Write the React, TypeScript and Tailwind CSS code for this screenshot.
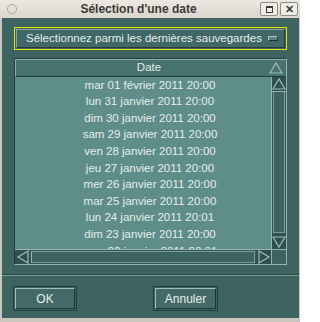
import React from "react";

const rows = [
  "mar 01 février 2011 20:00",
  "lun 31 janvier 2011 20:00",
  "dim 30 janvier 2011 20:00",
  "sam 29 janvier 2011 20:00",
  "ven 28 janvier 2011 20:00",
  "jeu 27 janvier 2011 20:00",
  "mer 26 janvier 2011 20:00",
  "mar 25 janvier 2011 20:00",
  "lun 24 janvier 2011 20:01",
  "dim 23 janvier 2011 20:00",
  "sam 22 janvier 2011 20:01",
];

function Tri({ dir }: { dir: "up" | "down" | "left" | "right" }) {
  const pts = {
    up: "1,12 7,2 13,12",
    down: "1,2 7,12 13,2",
    left: "12,1 2,7 12,13",
    right: "2,1 12,7 2,13",
  }[dir];
  return (
    <svg width="14" height="14" viewBox="0 0 14 14">
      <polygon points={pts} fill="none" stroke="#9fbdb9" strokeWidth="1.2" />
    </svg>
  );
}

export default function App() {
  return (
    <div
      className="w-[300px] h-[322px] bg-[#d8d5cd] flex flex-col overflow-hidden text-[#e4eeeb]"
      style={{ fontFamily: '"Liberation Sans", Arial, sans-serif' }}
    >
      {/* Title bar */}
      <div className="h-[18px] shrink-0 flex items-center px-[7px] bg-gradient-to-b from-[#ece9e3] to-[#d9d5cc]">
        <div className="w-[10px] h-[10px] rounded-full border border-[#a9a59c] bg-[#e4e1da]" />
        <div className="flex-1 text-center text-[12px] font-bold text-[#3c3b37]">
          Sélection d'une date
        </div>
        <div className="flex gap-[2px] -mr-[5px]">
          <div className="w-[18px] h-[14px] border border-[#8d8a83] rounded-[2px] bg-[#efede8] flex items-center justify-center">
            <div className="w-[7px] h-[7px] border border-[#3c3b37] border-t-2" />
          </div>
          <div className="w-[18px] h-[14px] border border-[#8d8a83] rounded-[2px] bg-[#efede8] flex items-center justify-center text-[11px] font-bold text-[#3c3b37] leading-none">
            ✕
          </div>
        </div>
      </div>

      {/* Body */}
      <div className="flex-1 flex flex-col bg-[#3e6462] border-l-2 border-r border-b-4 border-[#c9c6bd]">
        <div className="px-[12px] pt-[9px]">
          {/* Combo */}
          <div className="h-[23px] border border-[#e6e600] p-[1px]">
            <div className="h-full border-t border-l border-[#86a8a5] border-r border-b border-r-[#233d3c] border-b-[#233d3c] bg-[#416866] flex items-center pl-[9px] pr-[4px] text-[11.5px] whitespace-nowrap">
              <span className="flex-1">Sélectionnez parmi les dernières sauvegardes</span>
              <div className="shrink-0 w-[10px] h-[5px] bg-[#5c8683] border-t border-l border-[#a9c4c1] border-b border-r border-b-[#1e3534] border-r-[#1e3534] mr-[2px]" />
            </div>
          </div>

          {/* List */}
          <div className="mt-[8px] h-[207px] border border-[#233d3c] border-r-[#97b3b0] border-b-[#97b3b0] flex flex-col">
            <div className="h-[18px] shrink-0 bg-[#487270] border-t border-l border-[#8fb0ad] border-b border-b-[#233d3c] flex items-center text-[11.5px]">
              <div className="flex-1 text-center pl-[14px]">Date</div>
              <div className="w-[16px] flex justify-center mr-[2px]">
                <Tri dir="up" />
              </div>
            </div>
            <div className="flex-1 flex min-h-0">
              <div className="flex-1 bg-[#5f8d8a] overflow-hidden">
                {rows.map((r) => (
                  <div key={r} className="h-[16.6px] flex items-center justify-center text-[11.5px] whitespace-nowrap pl-[14px]">
                    {r}
                  </div>
                ))}
              </div>
              <div className="w-[15px] bg-[#355856] flex flex-col border-l border-[#97b3b0]">
                <div className="h-[15px] bg-[#2f504e] flex items-center justify-center border-b border-[#97b3b0]">
                  <Tri dir="up" />
                </div>
                <div className="flex-1 border border-[#7a9b98] border-t-0 bg-[#3e6462] m-[1px] mt-0" />
                <div className="h-[15px] bg-[#2f504e] flex items-center justify-center">
                  <Tri dir="down" />
                </div>
              </div>
            </div>
            <div className="h-[15px] shrink-0 flex">
              <div className="flex-1 flex bg-[#355856] border-t border-[#97b3b0]">
                <div className="w-[15px] bg-[#2f504e] flex items-center justify-center">
                  <Tri dir="left" />
                </div>
                <div className="flex-1 bg-[#3e6462] border border-[#7a9b98] border-l-[#97b3b0] m-[1px]" />
                <div className="w-[15px] bg-[#2f504e] flex items-center justify-center">
                  <Tri dir="right" />
                </div>
              </div>
              <div className="w-[15px] bg-[#3e6462] border-t border-l border-[#97b3b0]" />
            </div>
          </div>
        </div>

        {/* Separator */}
        <div className="mt-[9px] h-[2px] border-t border-[#2a4645] border-b border-b-[#7d9c99]" />

        {/* Buttons */}
        <div className="flex pl-[11px] pt-[10px] gap-[76px]">
          <div className="w-[64px] h-[25px] border border-[#233d3c] p-[1px]">
            <div className="h-full border-t border-l border-[#a2bfbc] border-r border-b border-r-[#1e3534] border-b-[#1e3534] bg-[#436a68] flex items-center justify-center text-[12px]">
              OK
            </div>
          </div>
          <div className="w-[65px] h-[25px] border border-[#233d3c] p-[1px]">
            <div className="h-full border-t border-l border-[#a2bfbc] border-r border-b border-r-[#1e3534] border-b-[#1e3534] bg-[#436a68] flex items-center justify-center text-[12px]">
              Annuler
            </div>
          </div>
        </div>
      </div>
    </div>
  );
}
